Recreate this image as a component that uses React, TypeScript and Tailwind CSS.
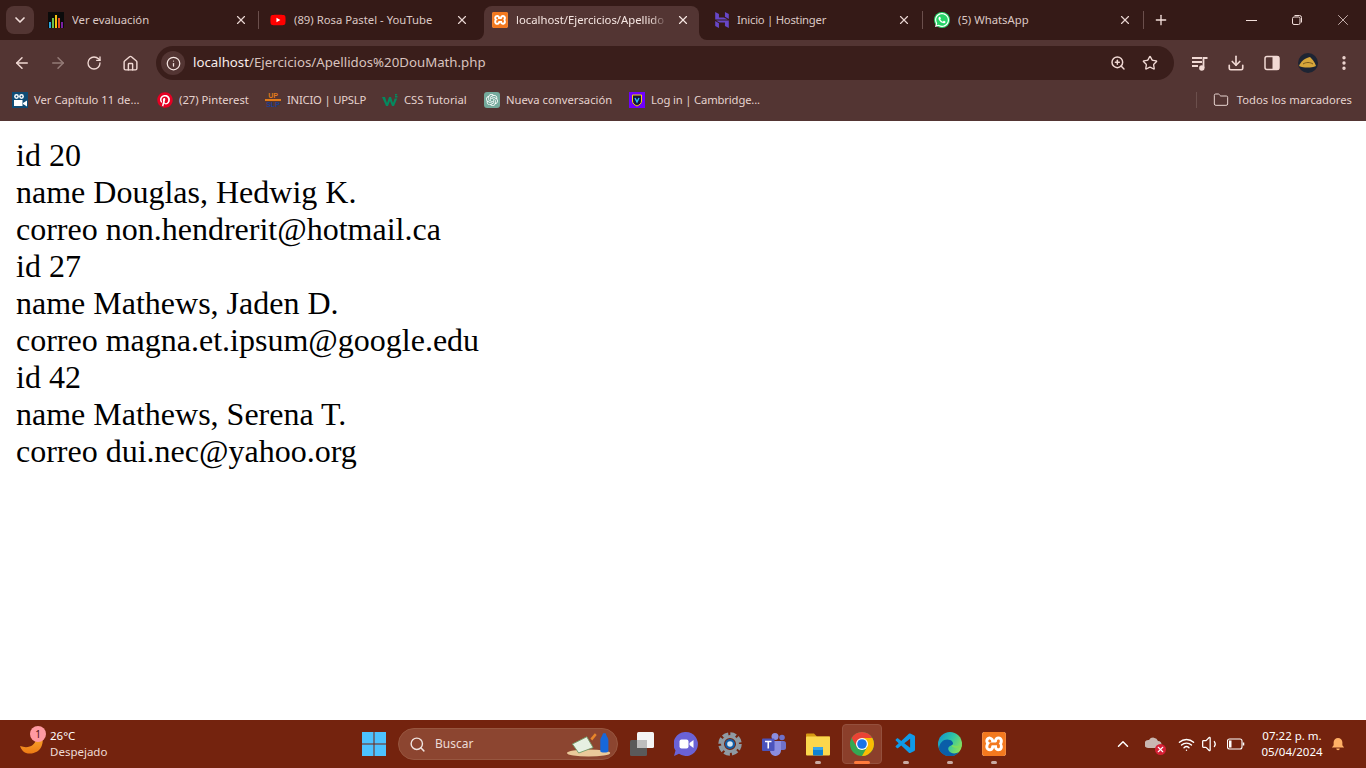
import React from "react";
import {
  ArrowLeft,
  ArrowRight,
  ChevronDown,
  ChevronUp,
  Download,
  EllipsisVertical,
  Folder,
  House,
  Info,
  Plus,
  RotateCw,
  Search,
  Star,
  Volume1,
  Wifi,
  X,
  ZoomIn,
} from "lucide-react";
import { FaPinterest, FaWhatsapp, FaYoutube } from "react-icons/fa";
import { SiHostinger, SiOpenai, SiXampp } from "react-icons/si";
import { VscVscode } from "react-icons/vsc";

const UI_FONT = "font-['Noto_Sans',sans-serif]";

/* ---------- favicons ---------- */

const ChartIcon = () => (
  <svg viewBox="0 0 16 16" className="w-4 h-4">
    <rect width="16" height="16" fill="#0b0b0b" />
    <rect x="1" y="10" width="2" height="6" fill="#2aa7e0" />
    <rect x="4" y="6" width="2" height="10" fill="#6cc04a" />
    <rect x="7" y="3" width="2" height="13" fill="#f4c20d" />
    <rect x="10" y="6" width="2" height="10" fill="#e8501f" />
    <rect x="13" y="10" width="2" height="6" fill="#7b1fa2" />
  </svg>
);

// the glyph itself is a filled square with the mark cut out of it
const XamppIcon = ({ size = "w-4 h-4" }: { size?: string }) => (
  <div className={`${size} bg-white rounded-[3px] flex items-center justify-center`}>
    <SiXampp className="w-full h-full text-[#f3791f]" />
  </div>
);

const WhatsAppIcon = () => (
  <div className="w-4 h-4 rounded-full bg-[#25d366] flex items-center justify-center">
    <FaWhatsapp className="w-4 h-4 text-white" />
  </div>
);

const CameraMark = () => (
  <svg viewBox="0 0 16 16" className="w-4 h-4">
    <rect width="16" height="16" fill="#0f4c75" />
    <circle cx="4.500" cy="4.500" r="2.400" fill="#fff" />
    <circle cx="9.500" cy="4.500" r="2.400" fill="#fff" />
    <circle cx="4.500" cy="4.500" r="0.900" fill="#0f4c75" />
    <circle cx="9.500" cy="4.500" r="0.900" fill="#0f4c75" />
    <rect x="2" y="8" width="8.500" height="6" fill="#fff" />
    <path d="M11 11l4-2.500v6L11 12z" fill="#fff" />
  </svg>
);

const UpslpMark = () => (
  <div className="w-4 h-4 flex flex-col items-center justify-center font-['Liberation_Sans',sans-serif] text-[7px] leading-[7px] font-bold">
    <span className="text-[#e07b1a]">UP</span>
    <span className="w-4 h-[2px] shrink-0 bg-[#e07b1a]" />
    <span className="text-[#1d3f8f]">SLP</span>
  </div>
);

const W3Mark = () => (
  <svg viewBox="0 0 16 16" className="w-4 h-4">
    <path d="M0 5h3l2 6 2-6h2l2 6 1.600-4.500h2.600L12 14h-2L8 9l-2 5H4z" fill="#04895f" />
    <path d="M13 2h2.500L14 4h1.500v1.500H13V4l1-.800h-1z" fill="#04895f" />
  </svg>
);

const ChatMark = () => (
  <div className="w-4 h-4 rounded-[3px] bg-[#74aa9c] flex items-center justify-center">
    <SiOpenai className="w-3 h-3 text-white" />
  </div>
);

const CambridgeMark = () => (
  <svg viewBox="0 0 16 16" className="w-4 h-4">
    <rect width="16" height="16" fill="#6f00ff" />
    <path d="M3.500 3h9v6c0 2.500-2 4-4.500 5-2.500-1-4.500-2.500-4.500-5z" fill="#15133c" stroke="#f5d90a" strokeWidth="1" />
    <path d="M6 6l2 4 2-4" fill="none" stroke="#27c4f5" strokeWidth="1.400" />
  </svg>
);

/* ---------- top of the browser ---------- */

const TabFlare = ({ side }: { side: "left" | "right" }) => (
  <svg
    viewBox="0 0 8 8"
    className={`absolute bottom-0 w-2 h-2 ${side === "left" ? "-left-2" : "-right-2 -scale-x-100"}`}
  >
    <path d="M8 0v8H0a8 8 0 0 0 8-8z" fill="#533533" />
  </svg>
);

const TabSlot = ({
  icon,
  title,
  width,
  closeClass = "mr-[10px]",
  textClass = "",
}: {
  icon: React.ReactNode;
  title: string;
  width: string;
  closeClass?: string;
  textClass?: string;
}) => (
  <div className={`flex items-center h-7 pl-2 ${width}`}>
    {icon}
    <span className={`ml-2 flex-1 truncate text-[11.3px] text-[#dcc8c4] ${textClass}`}>{title}</span>
    <X className={`w-[14px] h-[14px] text-[#e8d5d1] ${closeClass}`} strokeWidth={2} />
    <span className="w-px h-[18px] bg-[#6b4f4c]" />
    <span className="w-[3px]" />
  </div>
);

const TabStrip = () => (
  <div className="h-10 bg-[#351a17] flex items-start pt-[6px]">
    <div className="ml-[6px] mr-[6px] w-7 h-7 rounded-lg bg-[#533533] flex items-center justify-center">
      <ChevronDown className="w-4 h-4 text-[#f3dfdb]" strokeWidth={2.500} />
    </div>
    <TabSlot icon={<ChartIcon />} title="Ver evaluación" width="w-[222px]" />
    <div className="w-[222px] flex items-center h-7 pl-2">
      <div className="w-4 h-4 flex items-center justify-center">
        <FaYoutube className="w-[18px] h-[18px] text-[#ff0000] bg-[radial-gradient(circle,#fff_35%,transparent_36%)]" />
      </div>
      <span className="ml-2 flex-1 truncate text-[11.3px] text-[#dcc8c4]">(89) Rosa Pastel - YouTube</span>
      <X className="w-[14px] h-[14px] text-[#e8d5d1] mr-[15px]" strokeWidth={2} />
    </div>
    <div className="w-[222px] h-[34px]">
      <div className="relative w-[215px] h-[34px] bg-[#533533] rounded-t-lg flex items-center pl-2 pr-[9px] pb-[6px]">
        <TabFlare side="left" />
        <TabFlare side="right" />
        <XamppIcon />
        <span className="ml-2 w-[152px] overflow-hidden whitespace-nowrap text-[11.3px] text-[#f6e6e2] [mask-image:linear-gradient(to_right,black_88%,transparent)]">
          localhost/Ejercicios/Apellido
        </span>
        <span className="flex-1" />
        <X className="w-[14px] h-[14px] text-[#f6e6e2]" strokeWidth={2} />
      </div>
    </div>
    <TabSlot
      icon={<SiHostinger className="w-4 h-4 text-[#6747c7]" />}
      title="Inicio | Hostinger"
      width="w-[220px]"
      closeClass="mr-[11px]"
      textClass="tracking-[-0.25px] -translate-x-px"
    />
    <TabSlot icon={<WhatsAppIcon />} title="(5) WhatsApp" width="w-[221px]" closeClass="mr-[11px]" />
    <div className="ml-[6px] w-4 h-7 flex items-center justify-center">
      <Plus className="w-4 h-4 text-[#f3dfdb]" strokeWidth={2} />
    </div>
    <div className="flex-1" />
    <div className="flex items-center h-7 text-[#f3dfdb]">
      <div className="w-[46px] flex justify-center">
        <span className="w-[11px] h-px bg-[#f3dfdb]" />
      </div>
      <div className="w-[46px] flex justify-center">
        <svg viewBox="0 0 12 12" className="w-3 h-3" fill="none" stroke="currentColor">
          <rect x="1.500" y="3" width="7.500" height="7.500" rx="1.500" />
          <path d="M3.500 1.500h5a2 2 0 0 1 2 2v5" />
        </svg>
      </div>
      <div className="w-[46px] flex justify-center">
        <X className="w-[18px] h-[18px]" strokeWidth={1} />
      </div>
    </div>
  </div>
);

const ToolButton = ({ children, width = "w-9" }: { children: React.ReactNode; width?: string }) => (
  <div className={`${width} h-8 flex items-center justify-center text-[#f1d9d4]`}>{children}</div>
);

const AddressBar = () => (
  <div className="h-11 flex items-center pt-[2px] pl-1 pr-[4px]">
    <ToolButton><ArrowLeft className="w-[18px] h-[18px]" strokeWidth={2} /></ToolButton>
    <ToolButton><ArrowRight className="w-[18px] h-[18px] text-[#947b77]" strokeWidth={2} /></ToolButton>
    <ToolButton><RotateCw className="w-4 h-4" strokeWidth={2} /></ToolButton>
    <ToolButton><House className="w-[17px] h-[17px]" strokeWidth={2} /></ToolButton>
    <div className="ml-2 w-[1018px] h-[34px] rounded-full bg-[#3a1e1b] flex items-center pl-[5px] pr-4">
      <div className="w-6 h-6 rounded-full bg-[#533533] flex items-center justify-center">
        <Info className="w-[15px] h-[15px] text-[#f6e6e2]" strokeWidth={2} />
      </div>
      <div className={`ml-2 text-[13.25px] text-[#d9c3bf] ${UI_FONT}`}>
        <span className="text-[#f8ecea]">localhost</span>/Ejercicios/Apellidos%20DouMath.php
      </div>
      <div className="flex-1" />
      <ZoomIn className="w-4 h-4 mr-4 text-[#f1d9d4]" strokeWidth={2.200} />
      <Star className="w-4 h-4 text-[#f1d9d4]" strokeWidth={2} />
    </div>
    <div className="ml-[8px] flex items-center">
      <ToolButton>
        <svg viewBox="0 0 18 18" className="w-[18px] h-[18px]" fill="none" stroke="currentColor" strokeWidth="1.800">
          <path d="M1 4h10M1 8h10M1 12h6" />
          <path d="M12.500 14V4h4" />
          <circle cx="10.800" cy="14" r="1.800" fill="currentColor" />
        </svg>
      </ToolButton>
      <ToolButton width="w-[36px]"><Download className="w-[18px] h-[18px]" strokeWidth={2.200} /></ToolButton>
      <ToolButton width="w-[36px]">
        <svg viewBox="0 0 16 16" className="w-4 h-4">
          <rect x="1" y="1.500" width="14" height="13" rx="2" fill="none" stroke="currentColor" strokeWidth="1.500" />
          <rect x="8.500" y="1.500" width="6.500" height="13" fill="currentColor" />
        </svg>
      </ToolButton>
      <ToolButton width="w-[36px]">
        <svg viewBox="0 0 20 20" className="w-5 h-5">
          <circle cx="10" cy="10" r="10" fill="#1d2433" />
          <path d="M1 13c2-5 6-8 11-9 2 2 5 5 6 9-5 2-12 2-17 0z" fill="#d6a63a" />
          <path d="M5 11c3-2 7-2 10 0" stroke="#7a5a1c" strokeWidth="1" fill="none" />
        </svg>
      </ToolButton>
      <ToolButton width="w-[36px]"><EllipsisVertical className="w-[18px] h-[18px]" strokeWidth={2.500} /></ToolButton>
    </div>
  </div>
);

const Bookmark = ({
  icon,
  label,
  className,
  textClass = "",
}: {
  icon: React.ReactNode;
  label: string;
  className: string;
  textClass?: string;
}) => (
  <div className={`flex items-center ${className}`}>
    {icon}
    <span className={`ml-[6px] text-[11.25px] text-[#e6d3cf] whitespace-nowrap ${textClass}`}>{label}</span>
  </div>
);

const BookmarksBar = () => (
  <div className="h-[37px] pb-[5px] flex items-center pl-3 pr-[14px]">
    <Bookmark icon={<CameraMark />} label="Ver Capítulo 11 de..." className="w-[145px]" />
    <Bookmark icon={<FaPinterest className="w-4 h-4 text-[#e60023] bg-[radial-gradient(circle,#fff_60%,transparent_62%)]" />} label="(27) Pinterest" className="w-[108px]" />
    <Bookmark icon={<UpslpMark />} label="INICIO | UPSLP" className="w-[117px]" textClass="tracking-[-0.2px]" />
    <Bookmark icon={<W3Mark />} label="CSS Tutorial" className="w-[102px]" />
    <Bookmark icon={<ChatMark />} label="Nueva conversación" className="w-[145px]" />
    <Bookmark icon={<CambridgeMark />} label="Log in | Cambridge..." className="w-[140px]" textClass="tracking-[-0.15px]" />
    <div className="flex-1" />
    <span className="w-px h-4 bg-[#6b4f4c] mr-4" />
    <Folder className="w-4 h-4 text-[#e6d3cf]" strokeWidth={1.500} />
    <span className="ml-2 text-[11.25px] text-[#e6d3cf]">Todos los marcadores</span>
  </div>
);

/* ---------- page content ---------- */

const records = [
  { id: 20, name: "Douglas, Hedwig K.", correo: "non.hendrerit@hotmail.ca" },
  { id: 27, name: "Mathews, Jaden D.", correo: "magna.et.ipsum@google.edu" },
  { id: 42, name: "Mathews, Serena T.", correo: "dui.nec@yahoo.org" },
];

/* ---------- taskbar ---------- */

const TaskIcon = ({
  children,
  running,
  active,
}: {
  children: React.ReactNode;
  running?: boolean;
  active?: boolean;
}) => (
  <div className="relative w-11 h-10 flex items-center justify-center">
    {active && <div className="absolute left-[2px] right-[2px] inset-y-0 rounded-[4px] bg-[#8b3f2b] border border-[#94503d]" />}
    <div className="relative w-6 h-6 flex items-center justify-center">{children}</div>
    {running && <span className="absolute bottom-0 w-[6px] h-[3px] rounded-full bg-[#c9aba3]" />}
    {active && <span className="absolute bottom-0 w-4 h-[3px] rounded-full bg-[#ff7a3c]" />}
  </div>
);

const ChromeIcon = () => (
  <svg viewBox="2 2 20 20" className="w-6 h-6">
    <circle cx="12" cy="12" r="10" fill="#34a853" />
    <path d="M3.340 7A10 10 0 0 1 20.660 7H12L7.670 14.500z" fill="#ea4335" />
    <path d="M20.660 7A10 10 0 0 1 12 22l4.330-7.500L12 7z" fill="#fbbc04" />
    <circle cx="12" cy="12" r="5" fill="#fff" />
    <circle cx="12" cy="12" r="4" fill="#1a73e8" />
  </svg>
);

const EdgeIcon = () => (
  <svg viewBox="0 0 24 24" className="w-6 h-6">
    <defs>
      <linearGradient id="edge-top" x1="0" y1="0" x2="1" y2="0.600">
        <stop offset="0" stopColor="#0c8dd6" />
        <stop offset="0.550" stopColor="#2fc5a5" />
        <stop offset="1" stopColor="#8ae05a" />
      </linearGradient>
    </defs>
    <circle cx="12" cy="12" r="12" fill="url(#edge-top)" />
    <path d="M1 17C1 9 8 6 12 8c3 1 4 4 2 5-3 1-5 3-3 6 2 3 7 3 10 1-3 4-8 5-12 4-4-1-7-4-8-7z" fill="#0a5ea8" />
    <path d="M24 13c0 2-2 3-5 3-4 0-6-2-5-3 1 0 3 1 5 1s4-1 5-1z" fill="#7ddb5e" />
  </svg>
);

const TeamsIcon = () => (
  <svg viewBox="0 0 24 24" className="w-6 h-6">
    <circle cx="20" cy="5.500" r="2.800" fill="#6f71c9" />
    <circle cx="13" cy="4.500" r="3.500" fill="#8b8de0" />
    <rect x="16" y="9" width="8" height="9" rx="2.500" fill="#6f71c9" />
    <path d="M7 9h12v9a5.500 5.500 0 0 1-11 1z" fill="#8b8de0" />
    <rect x="0" y="6.500" width="12.500" height="12.500" rx="1" fill="#4b53bc" />
    <path d="M3 9.500h6.500M6.250 9.500v7" stroke="#fff" strokeWidth="1.600" />
  </svg>
);

const SettingsIcon = () => (
  <svg viewBox="0 0 24 24" className="w-6 h-6">
    <circle cx="12" cy="12" r="10" fill="none" stroke="#8f9aa3" strokeWidth="3.500" strokeDasharray="5.800 2.060" />
    <circle cx="12" cy="12" r="7.500" fill="none" stroke="#8f9aa3" strokeWidth="3" />
    <circle cx="12" cy="12" r="5" fill="#125fa8" />
    <circle cx="12" cy="12" r="2.800" fill="#d7e6f2" />
  </svg>
);

const ExplorerIcon = () => (
  <svg viewBox="0 0 24 24" className="w-6 h-6">
    <path d="M0 2.500a1 1 0 0 1 1-1h7l3 3h13V8H0z" fill="#d69a13" />
    <rect y="4.500" width="24" height="19" rx="1" fill="#fbd74d" />
    <rect x="7" y="15" width="10" height="8.500" rx="1" fill="#0f82d1" />
    <rect x="7" y="15" width="10" height="3" rx="1" fill="#36a6ea" />
  </svg>
);

const TaskView = () => (
  <svg viewBox="0 0 24 24" className="w-6 h-6">
    <rect x="0" y="8" width="17" height="16" rx="1.500" fill="#5a5a5a" />
    <rect x="7" y="0" width="17" height="16" rx="1.500" fill="#f4f4f4" />
    <path d="M7 8h10v8H7z" fill="#bdbdbd" />
  </svg>
);

const MeetIcon = () => (
  <svg viewBox="0 0 24 24" className="w-6 h-6">
    <path d="M12 0a12 12 0 1 1-7 21.800L0 24l1.500-5.500A12 12 0 0 1 12 0z" fill="#6a62d6" />
    <rect x="5.500" y="7.500" width="9" height="9" rx="2" fill="#fff" />
    <path d="M15.500 11l4-3v8l-4-3z" fill="#fff" />
  </svg>
);

const Taskbar = () => (
  <div className={`relative h-12 bg-[#74230e] flex items-center ${UI_FONT}`}>
    <div className="relative w-[352px] h-full flex items-center pl-[50px]">
      <svg viewBox="0 0 24 30" className="absolute left-[20px] top-[6px] w-[24px] h-[30px]">
        <defs>
          <linearGradient id="moon" x1="0" y1="0" x2="0" y2="1">
            <stop offset="0" stopColor="#ffc23d" />
            <stop offset="1" stopColor="#ee7a14" />
          </linearGradient>
        </defs>
        <path d="M16 1c6 5 8 12 6 18-2 7-10 10-16 8-3-1-5-4-6-7 8 3 15 0 16-7 1-4 0-8 0-12z" fill="url(#moon)" />
      </svg>
      <div className="absolute left-[30px] top-[6px] w-4 h-4 rounded-full bg-[#ff9aa2] text-[#4a1010] text-[10px] leading-4 text-center">1</div>
      <div className="flex flex-col text-[11.5px] leading-[16px] text-white">
        <span>26°C</span>
        <span className="text-[#efdcd6]">Despejado</span>
      </div>
    </div>
    <div className="flex items-center">
      <div className="w-11 flex justify-center">
        <svg viewBox="0 0 24 24" className="w-6 h-6">
          <path d="M0 0h11.500v11.500H0zM12.500 0H24v11.500H12.500zM0 12.500h11.500V24H0zM12.500 12.500H24V24H12.500z" fill="#4cc2ff" />
        </svg>
      </div>
      <div className="ml-[2px] w-[220px] h-8 rounded-full bg-[#8c4530] border border-[#97563f] flex items-center pl-[10px] pr-[5px]">
        <Search className="w-[17px] h-[17px] text-[#f0e4e0]" strokeWidth={2} />
        <span className="ml-[9px] text-xs text-[#ecdbd6]">Buscar</span>
        <div className="flex-1" />
        <svg viewBox="0 0 50 28" className="w-[45px] h-[26px]">
          <ellipse cx="24" cy="24" rx="24" ry="4" fill="#eac99a" />
          <path d="M6 14l16-8 7 12-16 6z" fill="#e6f0e2" stroke="#6f9a66" />
          <path d="M26 8l5-6 2 2-5 6z" fill="#e8862a" />
          <path d="M37 10c0-3 2-4 3-8h3c1 4 3 5 3 8v12c0 2-9 2-9 0z" fill="#1667d9" />
        </svg>
      </div>
    </div>
    <div className="ml-[2px] flex items-center">
      <TaskIcon><TaskView /></TaskIcon>
      <TaskIcon><MeetIcon /></TaskIcon>
      <TaskIcon><SettingsIcon /></TaskIcon>
      <TaskIcon><TeamsIcon /></TaskIcon>
      <TaskIcon running><ExplorerIcon /></TaskIcon>
      <TaskIcon active><ChromeIcon /></TaskIcon>
      <TaskIcon running><VscVscode className="w-6 h-6 text-[#0f9ae8]" /></TaskIcon>
      <TaskIcon running><EdgeIcon /></TaskIcon>
      <TaskIcon running><XamppIcon size="w-6 h-6" /></TaskIcon>
    </div>
    <div className="flex-1" />
    <div className="flex items-center text-white">
      <ChevronUp className="w-[18px] h-[18px]" strokeWidth={2} />
      <div className="relative ml-[13px] w-5 h-5">
        <svg viewBox="0 0 20 20" className="w-5 h-5">
          <path d="M3 14a4 4 0 0 1 1-8 5 5 0 0 1 9 1 3 3 0 0 1 0 7z" fill="#c9b7b1" />
        </svg>
        <div className="absolute -right-[1px] -bottom-[1px] w-[11px] h-[11px] rounded-full bg-[#d61f35] flex items-center justify-center">
          <X className="w-[9px] h-[9px] text-white" strokeWidth={3} />
        </div>
      </div>
      <Wifi className="ml-[13px] w-[17px] h-[17px]" strokeWidth={2} />
      <Volume1 className="ml-[6px] w-5 h-5" strokeWidth={1.500} />
      <svg viewBox="0 0 18 12" className="ml-[6px] w-[18px] h-3" fill="none" stroke="currentColor">
        <rect x="0.500" y="1" width="14.500" height="10" rx="2" strokeWidth="1.100" />
        <rect x="2" y="2.500" width="2.500" height="7" fill="currentColor" stroke="none" />
        <path d="M16.500 4.500v3" strokeWidth="1.500" />
      </svg>
      <div className="ml-[11px] w-[72px] flex flex-col items-center text-[11.5px] leading-[16px] whitespace-nowrap">
        <span>07:22 p. m.</span>
        <span>05/04/2024</span>
      </div>
      <svg viewBox="0 0 16 16" className="ml-[3px] mr-[21px] w-[14px] h-[14px] text-[#ffb066]" fill="currentColor">
        <path d="M8 1a5 5 0 0 0-5 5v3.500L1 12h14l-2-2.500V6a5 5 0 0 0-5-5z" />
        <path d="M6 13h4a2 2 0 0 1-4 0z" />
      </svg>
    </div>
  </div>
);

const App = () => (
  <div className="h-screen w-full flex flex-col overflow-hidden bg-white">
    <div className={`shrink-0 ${UI_FONT} bg-[#533533]`}>
      <TabStrip />
      <AddressBar />
      <BookmarksBar />
    </div>
    <main className="flex-1 p-4 font-['Liberation_Serif',serif] text-[32px] leading-[37px] text-black">
      {records.map((r) => (
        <div key={r.id}>
          <div>id {r.id}</div>
          <div>name {r.name}</div>
          <div>correo {r.correo}</div>
        </div>
      ))}
    </main>
    <Taskbar />
  </div>
);

export default App;
